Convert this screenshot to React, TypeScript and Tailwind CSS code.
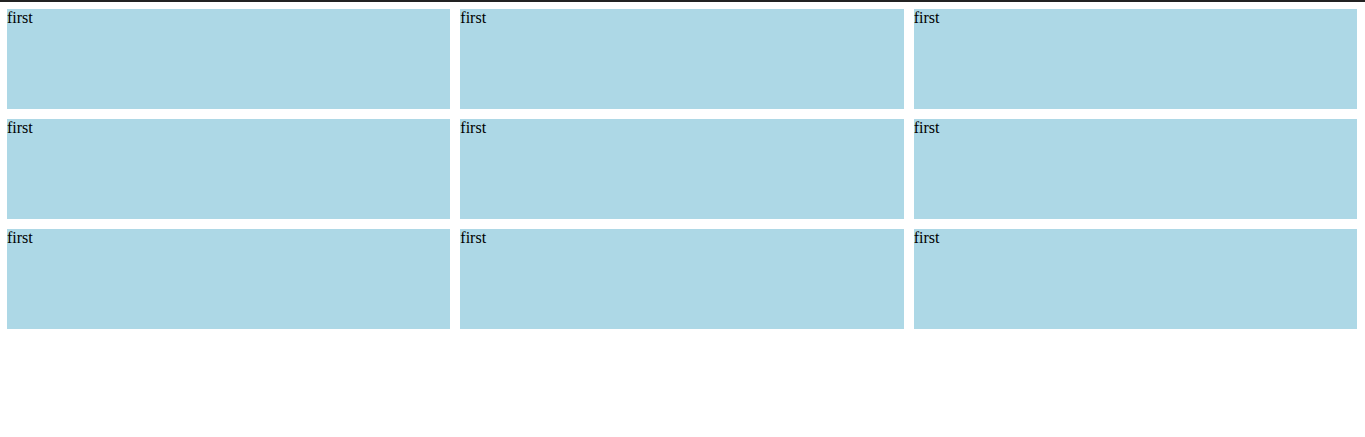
export default function App() {
  const cells = Array.from({ length: 9 });

  return (
    <div className="min-h-[437px] bg-white border-t-2 border-[#222222] font-serif">
      <div className="grid grid-cols-3 gap-[10px] w-[1350px] ml-[7px] pt-[7px]">
        {cells.map((_, i) => (
          <div
            key={i}
            className="h-[100px] bg-[#add8e6] text-black text-[16px] leading-[18px] font-['Liberation_Serif']"
          >
            first
          </div>
        ))}
      </div>
    </div>
  );
}
